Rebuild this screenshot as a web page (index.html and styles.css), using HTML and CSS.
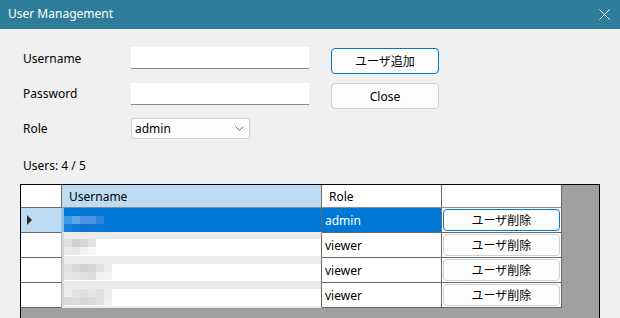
FILE: index.html
```html
<!DOCTYPE html>
<html lang="ja">
<head>
    <meta charset="UTF-8">
    <title>User Management</title>
    <link rel="stylesheet" href="styles.css">
</head>
<body>
<div class="window">
    <div class="titlebar">
        <span class="title">User Management</span>
        <span class="close">
            <svg width="11" height="11" viewBox="0 0 11 11"><path d="M0.5 0.5 L10.5 10.5 M10.5 0.5 L0.5 10.5" stroke="#fff" stroke-width="1"/></svg>
        </span>
    </div>

    <div class="body">
        <div class="form">
            <div class="fields">
                <label class="lbl">Username</label>
                <div class="textbox"></div>
                <label class="lbl">Password</label>
                <div class="textbox"></div>
                <label class="lbl">Role</label>
                <div class="combo">
                    <span>admin</span>
                    <svg width="9" height="5" viewBox="0 0 9 5"><path d="M0.5 0.5 L4.5 4.5 L8.5 0.5" fill="none" stroke="#6a6a6a" stroke-width="1"/></svg>
                </div>
            </div>
            <div class="actions">
                <button class="btn btn-default">ユーザ追加</button>
                <button class="btn">Close</button>
            </div>
        </div>

        <div class="count">Users: 4 / 5</div>

        <div class="gridview">
            <div class="grid">
                <!-- header -->
                <div class="c rh"></div>
                <div class="c hd hd-sel">Username</div>
                <div class="c hd">Role</div>
                <div class="c hd"></div>

                <!-- row 1 (selected) -->
                <div class="c rh rh-sel"><span class="arrow"></span></div>
                <div class="c user user-sel">
                    <div class="mosaic">
                        <i style="background:#3d9be6"></i><i style="background:#58a7e8"></i><i style="background:#4a92df"></i><i style="background:#4b93e0"></i><i style="background:#2a86dc"></i>
                        <i style="background:#1a7fdb"></i><i style="background:#1577d5"></i><i style="background:#0f70d0"></i><i style="background:#1276d4"></i><i style="background:#0a7ad9"></i>
                    </div>
                </div>
                <div class="c role role-sel">admin</div>
                <div class="c act"><button class="del del-sel">ユーザ削除</button></div>

                <!-- row 2 -->
                <div class="c rh"></div>
                <div class="c user">
                    <div class="mosaic">
                        <i style="background:#e0e0e0"></i><i style="background:#d2d2d2"></i><i style="background:#d6d6d6"></i><i style="background:#e4e4e4"></i><i style="background:#fff"></i>
                        <i style="background:#ebebeb"></i><i style="background:#e6e6e6"></i><i style="background:#f2f2f2"></i><i style="background:#f6f6f6"></i><i style="background:#fff"></i>
                    </div>
                </div>
                <div class="c role">viewer</div>
                <div class="c act"><button class="del">ユーザ削除</button></div>

                <!-- row 3 -->
                <div class="c rh"></div>
                <div class="c user">
                    <div class="mosaic wide">
                        <i style="background:#e2e2e2"></i><i style="background:#d8d8d8"></i><i style="background:#cfcfd2"></i><i style="background:#d6d6d8"></i><i style="background:#e0e2e4"></i><i style="background:#ececec"></i>
                        <i style="background:#e8e4e2"></i><i style="background:#e4e4e4"></i><i style="background:#e2e0e4"></i><i style="background:#dcdcdc"></i><i style="background:#f2f2f2"></i><i style="background:#f4f4f4"></i>
                    </div>
                </div>
                <div class="c role">viewer</div>
                <div class="c act"><button class="del">ユーザ削除</button></div>

                <!-- row 4 -->
                <div class="c rh"></div>
                <div class="c user">
                    <div class="mosaic wide">
                        <i style="background:#ececec"></i><i style="background:#e4e4e4"></i><i style="background:#dedede"></i><i style="background:#e6e6e6"></i><i style="background:#e0e0e0"></i><i style="background:#ececec"></i>
                        <i style="background:#dcdad8"></i><i style="background:#dcdcdc"></i><i style="background:#d6d6d6"></i><i style="background:#dadada"></i><i style="background:#e0e2e4"></i><i style="background:#f0f2f2"></i>
                    </div>
                </div>
                <div class="c role">viewer</div>
                <div class="c act"><button class="del">ユーザ削除</button></div>
            </div>
        </div>
    </div>
</div>
</body>
</html>
```

FILE: styles.css
```css
* {
    margin: 0;
    padding: 0;
    box-sizing: border-box;
}

body {
    width: 620px;
    height: 318px;
    overflow: hidden;
    background: #f0f0f0;
    font-family: "Noto Sans", "Noto Sans CJK JP", sans-serif;
    font-size: 12px;
    color: #000;
}

.window {
    height: 318px;
    display: flex;
    flex-direction: column;
}

/* title bar */
.titlebar {
    height: 29px;
    flex: none;
    background: #2d7d9a;
    color: #fff;
    display: flex;
    align-items: center;
    justify-content: space-between;
    padding: 0 10px 2px 8px;
}

.titlebar .title {
    font-size: 12px;
}

.titlebar .close {
    display: flex;
    margin-top: 2px;
}

/* body */
.body {
    flex: 1;
    display: flex;
    flex-direction: column;
    min-height: 0;
}

.form {
    display: flex;
    padding: 18px 0 0 23px;
}

.fields {
    display: grid;
    grid-template-columns: 108px 178px;
    grid-template-rows: 23px 22px 21px;
    row-gap: 13px;
    align-items: center;
}

.lbl {
    line-height: 16px;
}

.textbox {
    height: 22px;
    background: #fff;
    border-bottom: 1px solid #8a8a8a;
    align-self: start;
}

.combo {
    width: 119px;
    height: 21px;
    background: #fdfdfd;
    border: 1px solid #cfcfcf;
    border-radius: 2px;
    display: flex;
    align-items: center;
    justify-content: space-between;
    padding: 0 5px 0 3px;
}

.actions {
    display: flex;
    flex-direction: column;
    gap: 9px;
    margin: 1px 0 0 22px;
}

.btn {
    width: 108px;
    height: 26px;
    font: inherit;
    background: #fdfdfd;
    border: 1px solid #d0d0d0;
    border-radius: 4px;
    color: #000;
}

.btn-default {
    border-color: #0078d7;
}

.count {
    margin: 19px 0 0 23px;
    line-height: 16px;
}

/* data grid */
.gridview {
    flex: 1;
    margin: 10px 20px 0 20px;
    border: 1px solid #000;
    border-bottom: none;
    background: #a0a0a0;
}

.grid {
    display: grid;
    grid-template-columns: 41px 260px 120px 120px;
    grid-template-rows: 23px repeat(4, 25px);
}

.c {
    border-right: 1px solid #696969;
    border-bottom: 1px solid #696969;
    background: #fff;
    display: flex;
    align-items: center;
    white-space: nowrap;
}

.hd {
    padding-left: 7px;
    border-bottom-color: #8c8c8c;
}

.hd-sel {
    background: #bcdcf4;
}

.rh {
    border-right-color: #b4b4b4;
}

.grid > .rh:first-child {
    border-right-color: #696969;
}

.rh-sel {
    background: #bcdcf4;
    border-right-color: #9fc8ec;
}

.arrow {
    width: 0;
    height: 0;
    margin-left: 6px;
    border-left: 5px solid #2b2b2b;
    border-top: 5px solid transparent;
    border-bottom: 5px solid transparent;
}

.user {
    align-items: flex-start;
    border-bottom-color: #ebebeb;
    background: linear-gradient(#ebebeb 0 6px, #fff 6px calc(100% - 1px), #ebebeb calc(100% - 1px));
    box-shadow: inset 2px 0 #d8d8d8;
    padding: 6px 0 0 2px;
}

.user-sel {
    background: #0078d7;
    border-bottom-color: #ebebeb;
    box-shadow: inset 2px 0 #8ec0ec;
    padding-top: 8px;
}

.mosaic {
    display: grid;
    grid-template-columns: repeat(5, 8px);
    grid-auto-rows: 8px;
}

.mosaic.wide {
    grid-template-columns: repeat(6, 8px);
}

.mosaic i {
    display: block;
}

.role {
    padding-left: 3px;
}

.role-sel {
    background: #0078d7;
    color: #fff;
}

.act {
    padding: 1px;
}

.del {
    width: 100%;
    height: 100%;
    font: inherit;
    background: #fdfdfd;
    border: 1px solid #d0d0d0;
    border-radius: 4px;
    color: #000;
}

.del-sel {
    border: 1px solid #0078d7;
}
```
